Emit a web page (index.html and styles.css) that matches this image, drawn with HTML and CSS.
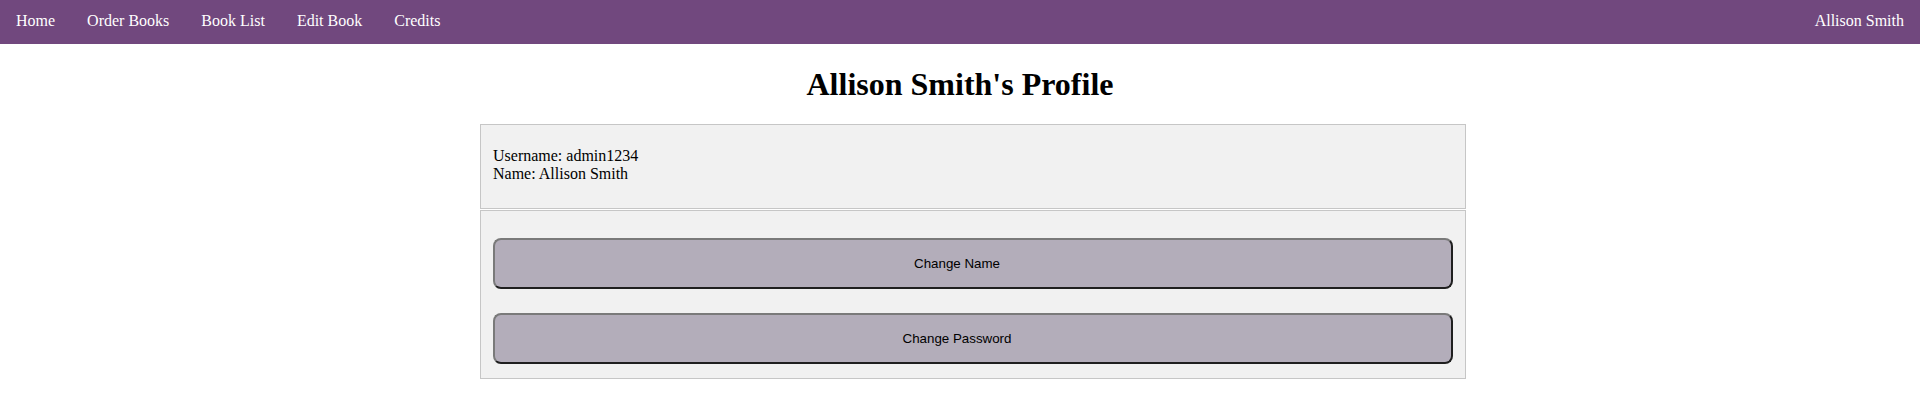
FILE: index.html
```
<!DOCTYPE html>
<html>
<head>
<meta charset="utf-8">
<title>Profile</title>
<link rel="stylesheet" href="styles.css">
</head>
<body>
<nav class="topnav">
  <a class="nav-link" href="#">Home</a>
  <a class="nav-link" href="#">Order Books</a>
  <a class="nav-link" href="#">Book List</a>
  <a class="nav-link" href="#">Edit Book</a>
  <a class="nav-link" href="#">Credits</a>
  <a class="nav-link nav-user" href="#">Allison Smith</a>
</nav>
<h1 class="title">Allison Smith's Profile</h1>
<div class="card info">
  <div>Username: admin1234</div>
  <div>Name: Allison Smith</div>
</div>
<div class="card actions">
  <button class="action-btn">Change Name</button>
  <button class="action-btn">Change Password</button>
</div>
</body>
</html>
```
FILE: styles.css
```
body {
  margin: 0;
  font-family: "Liberation Serif", "Times New Roman", serif;
  font-size: 16px;
  background: #ffffff;
  color: #000;
}
.topnav {
  display: flex;
  height: 44px;
  background: #71487e;
}
.nav-link {
  color: #ffffff;
  text-decoration: none;
  padding: 0 16px;
  line-height: 42px;
}
.nav-user {
  margin-left: auto;
}
.title {
  text-align: center;
  font-size: 32px;
  margin: 22px 0 21px;
}
.card {
  width: 50%;
  margin-left: 25%;
  padding: 12px;
  background: #f1f1f1;
  border: 1px solid #c6c6c6;
}
.info {
  padding: 22px 12px 25px;
  line-height: 18px;
}
.actions {
  margin-top: 1px;
  padding: 27px 12px 14px;
  display: flex;
  flex-direction: column;
  gap: 24px;
}
.action-btn {
  height: 51px;
  width: 100%;
  box-sizing: border-box;
  background: #b3adba;
  border: 2px solid;
  border-color: #7a7a7a #1f1f1f #1f1f1f #7a7a7a;
  border-radius: 8px;
  font-family: "Liberation Sans", Arial, sans-serif;
  font-size: 13.333px;
  color: #000;
  padding: 0 32px 0 0;
}
```
